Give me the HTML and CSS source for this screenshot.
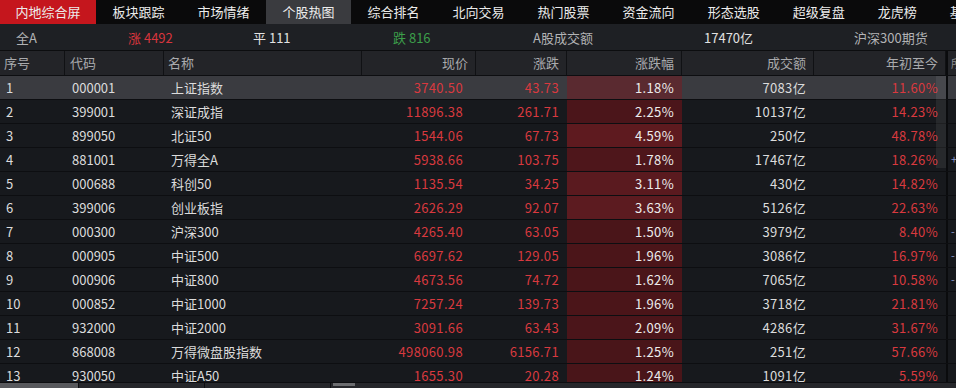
FILE: index.html
```html
<!DOCTYPE html>
<html lang="zh-CN">
<head>
<meta charset="utf-8">
<title>个股热图</title>
<link rel="stylesheet" href="styles.css">
</head>
<body>
<div class="screen">
  <nav class="tabs">
    <div class="tab tab-home">内地综合屏</div>
    <div class="tab">板块跟踪</div>
    <div class="tab">市场情绪</div>
    <div class="tab tab-active">个股热图</div>
    <div class="tab">综合排名</div>
    <div class="tab">北向交易</div>
    <div class="tab">热门股票</div>
    <div class="tab">资金流向</div>
    <div class="tab">形态选股</div>
    <div class="tab">超级复盘</div>
    <div class="tab">龙虎榜</div>
    <div class="tab">基金</div>
  </nav>

  <div class="status">
    <span class="muted">全A</span>
    <span class="up">涨 4492</span>
    <span class="bright">平 111</span>
    <span class="down">跌 816</span>
    <span class="muted">A股成交额</span>
    <span class="bright">17470亿</span>
    <span class="muted">沪深300期货</span>
  </div>

  <div class="grid">
    <div class="row head">
      <div class="c c-no">序号</div>
      <div class="c c-code">代码</div>
      <div class="c c-name">名称</div>
      <div class="c c-num c-price">现价</div>
      <div class="c c-num">涨跌</div>
      <div class="c c-num">涨跌幅</div>
      <div class="c c-num">成交额</div>
      <div class="c c-num">年初至今</div>
      <div class="c c-more">所</div>
    </div>

    <div class="body">
      <div class="thumb"></div>

      <div class="row sel">
        <div class="c c-no">1</div><div class="c c-code">000001</div><div class="c c-name">上证指数</div>
        <div class="c c-num c-price red">3740.50</div><div class="c c-num red">43.73</div>
        <div class="c c-num heat" style="background:#5a2a30">1.18%</div>
        <div class="c c-num">7083亿</div><div class="c c-num red">11.60%</div><div class="c c-more"></div>
      </div>
      <div class="row">
        <div class="c c-no">2</div><div class="c c-code">399001</div><div class="c c-name">深证成指</div>
        <div class="c c-num c-price red">11896.38</div><div class="c c-num red">261.71</div>
        <div class="c c-num heat" style="background:#4b151a">2.25%</div>
        <div class="c c-num">10137亿</div><div class="c c-num red">14.23%</div><div class="c c-more"></div>
      </div>
      <div class="row">
        <div class="c c-no">3</div><div class="c c-code">899050</div><div class="c c-name">北证50</div>
        <div class="c c-num c-price red">1544.06</div><div class="c c-num red">67.73</div>
        <div class="c c-num heat" style="background:#5e1a1f">4.59%</div>
        <div class="c c-num">250亿</div><div class="c c-num red">48.78%</div><div class="c c-more"></div>
      </div>
      <div class="row">
        <div class="c c-no">4</div><div class="c c-code">881001</div><div class="c c-name">万得全A</div>
        <div class="c c-num c-price red">5938.66</div><div class="c c-num red">103.75</div>
        <div class="c c-num heat" style="background:#4e161b">1.78%</div>
        <div class="c c-num">17467亿</div><div class="c c-num red">18.26%</div><div class="c c-more"><span class="mark">+</span></div>
      </div>
      <div class="row">
        <div class="c c-no">5</div><div class="c c-code">000688</div><div class="c c-name">科创50</div>
        <div class="c c-num c-price red">1135.54</div><div class="c c-num red">34.25</div>
        <div class="c c-num heat" style="background:#5a1a1f">3.11%</div>
        <div class="c c-num">430亿</div><div class="c c-num red">14.82%</div><div class="c c-more"></div>
      </div>
      <div class="row">
        <div class="c c-no">6</div><div class="c c-code">399006</div><div class="c c-name">创业板指</div>
        <div class="c c-num c-price red">2626.29</div><div class="c c-num red">92.07</div>
        <div class="c c-num heat" style="background:#5c1b20">3.63%</div>
        <div class="c c-num">5126亿</div><div class="c c-num red">22.63%</div><div class="c c-more"></div>
      </div>
      <div class="row">
        <div class="c c-no">7</div><div class="c c-code">000300</div><div class="c c-name">沪深300</div>
        <div class="c c-num c-price red">4265.40</div><div class="c c-num red">63.05</div>
        <div class="c c-num heat" style="background:#4a1519">1.50%</div>
        <div class="c c-num">3979亿</div><div class="c c-num red">8.40%</div><div class="c c-more"><span class="mark">-</span></div>
      </div>
      <div class="row">
        <div class="c c-no">8</div><div class="c c-code">000905</div><div class="c c-name">中证500</div>
        <div class="c c-num c-price red">6697.62</div><div class="c c-num red">129.05</div>
        <div class="c c-num heat" style="background:#4b1519">1.96%</div>
        <div class="c c-num">3086亿</div><div class="c c-num red">16.97%</div><div class="c c-more"><span class="mark">-</span></div>
      </div>
      <div class="row">
        <div class="c c-no">9</div><div class="c c-code">000906</div><div class="c c-name">中证800</div>
        <div class="c c-num c-price red">4673.56</div><div class="c c-num red">74.72</div>
        <div class="c c-num heat" style="background:#4a1519">1.62%</div>
        <div class="c c-num">7065亿</div><div class="c c-num red">10.58%</div><div class="c c-more"><span class="mark">-</span></div>
      </div>
      <div class="row">
        <div class="c c-no">10</div><div class="c c-code">000852</div><div class="c c-name">中证1000</div>
        <div class="c c-num c-price red">7257.24</div><div class="c c-num red">139.73</div>
        <div class="c c-num heat" style="background:#4b1519">1.96%</div>
        <div class="c c-num">3718亿</div><div class="c c-num red">21.81%</div><div class="c c-more"></div>
      </div>
      <div class="row">
        <div class="c c-no">11</div><div class="c c-code">932000</div><div class="c c-name">中证2000</div>
        <div class="c c-num c-price red">3091.66</div><div class="c c-num red">63.43</div>
        <div class="c c-num heat" style="background:#4b151a">2.09%</div>
        <div class="c c-num">4286亿</div><div class="c c-num red">31.67%</div><div class="c c-more"></div>
      </div>
      <div class="row">
        <div class="c c-no">12</div><div class="c c-code">868008</div><div class="c c-name">万得微盘股指数</div>
        <div class="c c-num c-price red">498060.98</div><div class="c c-num red">6156.71</div>
        <div class="c c-num heat" style="background:#491519">1.25%</div>
        <div class="c c-num">251亿</div><div class="c c-num red">57.66%</div><div class="c c-more"></div>
      </div>
      <div class="row">
        <div class="c c-no">13</div><div class="c c-code">930050</div><div class="c c-name">中证A50</div>
        <div class="c c-num c-price red">1655.30</div><div class="c c-num red">20.28</div>
        <div class="c c-num heat" style="background:#491519">1.24%</div>
        <div class="c c-num">1091亿</div><div class="c c-num red">5.59%</div><div class="c c-more"></div>
      </div>
    </div>
  </div>

  <div class="footer">
    <div class="seg seg-on"></div>
    <div class="seg"></div>
    <div class="seg"></div>
    <div class="seg seg-box"><span class="box"></span></div>
    <div class="seg seg-rest"></div>
  </div>
</div>
</body>
</html>
```

FILE: styles.css
```css
* { box-sizing: border-box; }

html, body {
  margin: 0;
  padding: 0;
  background: #17191d;
}

body {
  font-family: "Noto Sans CJK SC", "Microsoft YaHei", sans-serif;
  font-size: 13px;
  color: #dcdcdc;
  overflow: hidden;
}

.screen {
  width: 956px;
  height: 388px;
  display: flex;
  flex-direction: column;
  overflow: hidden;
}

/* top tabs */
.tabs {
  display: flex;
  height: 24px;
  flex: none;
  background: #0a0a0b;
  white-space: nowrap;
  overflow: hidden;
}
.tab {
  flex: none;
  padding: 0 16.5px;
  line-height: 24px;
  color: #ececec;
}
.tab-home { background: #c5161d; padding: 0 15.5px; }
.tab-active { background: #3a3b3f; }

/* status strip */
.status {
  flex: none;
  height: 27px;
  display: grid;
  grid-template-columns: 112px 125px 140px 140px 171px 150px 1fr;
  align-items: center;
  padding-left: 16px;
  background: #1e2024;
  border-bottom: 1px solid #0c0d0f;
  white-space: nowrap;
}
.muted { color: #b2b3b5; }
.bright { color: #e2e2e2; }
.up { color: #d8353d; }
.down { color: #3c9e4a; }

/* grid */
.grid {
  flex: none;
  height: 331px;
  display: flex;
  flex-direction: column;
  overflow: hidden;
}
.row {
  display: grid;
  grid-template-columns: 65px 99px 198px 114px 91px 115px 132px 132px 10px;
  height: 24px;
  flex: none;
  border-bottom: 1px solid #0d0e11;
  background: #17191d;
}
.c {
  line-height: 23px;
  white-space: nowrap;
  overflow: hidden;
}
.c-no { padding-left: 6px; }
.c-code { padding-left: 7px; }
.c-name { padding-left: 7px; }
.c-num { text-align: right; padding-right: 8px; letter-spacing: 0.35px; }
.c-price { padding-right: 13px; }
.c-more {
  border-left: 2px solid #0a0b0d;
  padding-left: 3px;
  font-size: 11px;
}
.mark { color: #8a9ac8; }

.head {
  height: 25px;
  background: #232428;
  border-bottom: 1px solid #0d0e11;
  color: #a9aaad;
}
.head .c {
  line-height: 24px;
  border-right: 1px solid #101114;
}
.head .c-no { padding-left: 4px; }
.head .c-code { padding-left: 5px; }
.head .c-name { padding-left: 4px; }
.head .c-num { padding-right: 7px; letter-spacing: 0; }
.head .c-more { border-right: none; color: #8a8b8f; }

.body {
  position: relative;
  flex: 1;
  overflow: hidden;
}
.sel { background: #3a3b40; }
.red { color: #d9393f; }
.heat { color: #ececec; }

.thumb {
  position: absolute;
  left: 936px;
  top: 0;
  width: 10px;
  height: 92px;
  background: rgba(255, 255, 255, 0.07);
  z-index: 2;
}

/* bottom strip */
.footer {
  flex: none;
  height: 6px;
  display: flex;
  background: #26272b;
  border-top: 1px solid #0d0e11;
}
.seg {
  width: 126px;
  border-right: 1px solid #0d0e11;
}
.seg-on { width: 79px; background: #58595d; }
.seg-box { width: 26px; position: relative; border-right: none; }
.box {
  display: block;
  margin-left: 2px;
  width: 22px;
  height: 3px;
  background: #6c6d70;
}
.seg-rest { flex: 1; border-right: none; }
```
